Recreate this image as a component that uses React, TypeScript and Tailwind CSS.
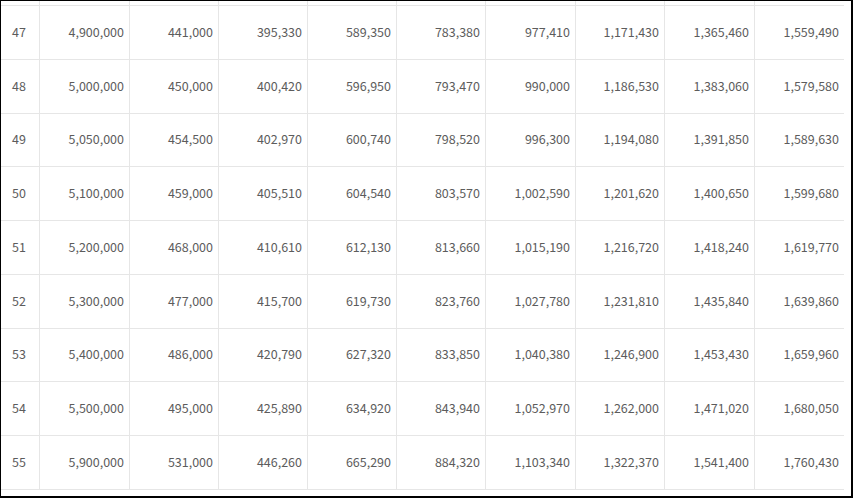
import React from "react";

const rows: string[][] = [
  ["47", "4,900,000", "441,000", "395,330", "589,350", "783,380", "977,410", "1,171,430", "1,365,460", "1,559,490"],
  ["48", "5,000,000", "450,000", "400,420", "596,950", "793,470", "990,000", "1,186,530", "1,383,060", "1,579,580"],
  ["49", "5,050,000", "454,500", "402,970", "600,740", "798,520", "996,300", "1,194,080", "1,391,850", "1,589,630"],
  ["50", "5,100,000", "459,000", "405,510", "604,540", "803,570", "1,002,590", "1,201,620", "1,400,650", "1,599,680"],
  ["51", "5,200,000", "468,000", "410,610", "612,130", "813,660", "1,015,190", "1,216,720", "1,418,240", "1,619,770"],
  ["52", "5,300,000", "477,000", "415,700", "619,730", "823,760", "1,027,780", "1,231,810", "1,435,840", "1,639,860"],
  ["53", "5,400,000", "486,000", "420,790", "627,320", "833,850", "1,040,380", "1,246,900", "1,453,430", "1,659,960"],
  ["54", "5,500,000", "495,000", "425,890", "634,920", "843,940", "1,052,970", "1,262,000", "1,471,020", "1,680,050"],
  ["55", "5,900,000", "531,000", "446,260", "665,290", "884,320", "1,103,340", "1,322,370", "1,541,400", "1,760,430"],
];

const colW = ["w-[38px]", "w-[90px]", "w-[89px]", "w-[89px]", "w-[89px]", "w-[89px]", "w-[90px]", "w-[89px]", "w-[90px]", "w-[90px]"];
const rowH = ["h-[54px]", "h-[54px]", "h-[53px]", "h-[54px]", "h-[54px]", "h-[54px]", "h-[53px]", "h-[54px]", "h-[54px]"];

function Cell({ i, children }: { i: number; children?: React.ReactNode }) {
  return (
    <div
      className={`${colW[i]} shrink-0 flex items-center pb-[1px] ${i === 0 ? "justify-start pl-[11px]" : "justify-end pr-[5px] border-l border-[#e6e6e6]"}`}
    >
      {children}
    </div>
  );
}

export default function App() {
  return (
    <div
      className="w-[853px] h-[498px] bg-white border-l border-t border-r-2 border-b-2 border-black overflow-hidden text-[12.5px] text-[#5c5c5c]"
      style={{ fontFamily: '"Noto Sans CJK KR", "Noto Sans", sans-serif' }}
    >
      <div className="w-[843px] flex flex-col">
        <div className="flex h-[4px]">
          {colW.map((_, i) => (
            <Cell key={i} i={i} />
          ))}
        </div>
        {rows.map((r, ri) => (
          <div key={ri} className={`flex border-t border-[#e6e6e6] ${rowH[ri]}`}>
            {r.map((v, i) => (
              <Cell key={i} i={i}>
                {v}
              </Cell>
            ))}
          </div>
        ))}
        <div className="flex h-[6px] border-t border-[#e6e6e6]" />
      </div>
    </div>
  );
}
